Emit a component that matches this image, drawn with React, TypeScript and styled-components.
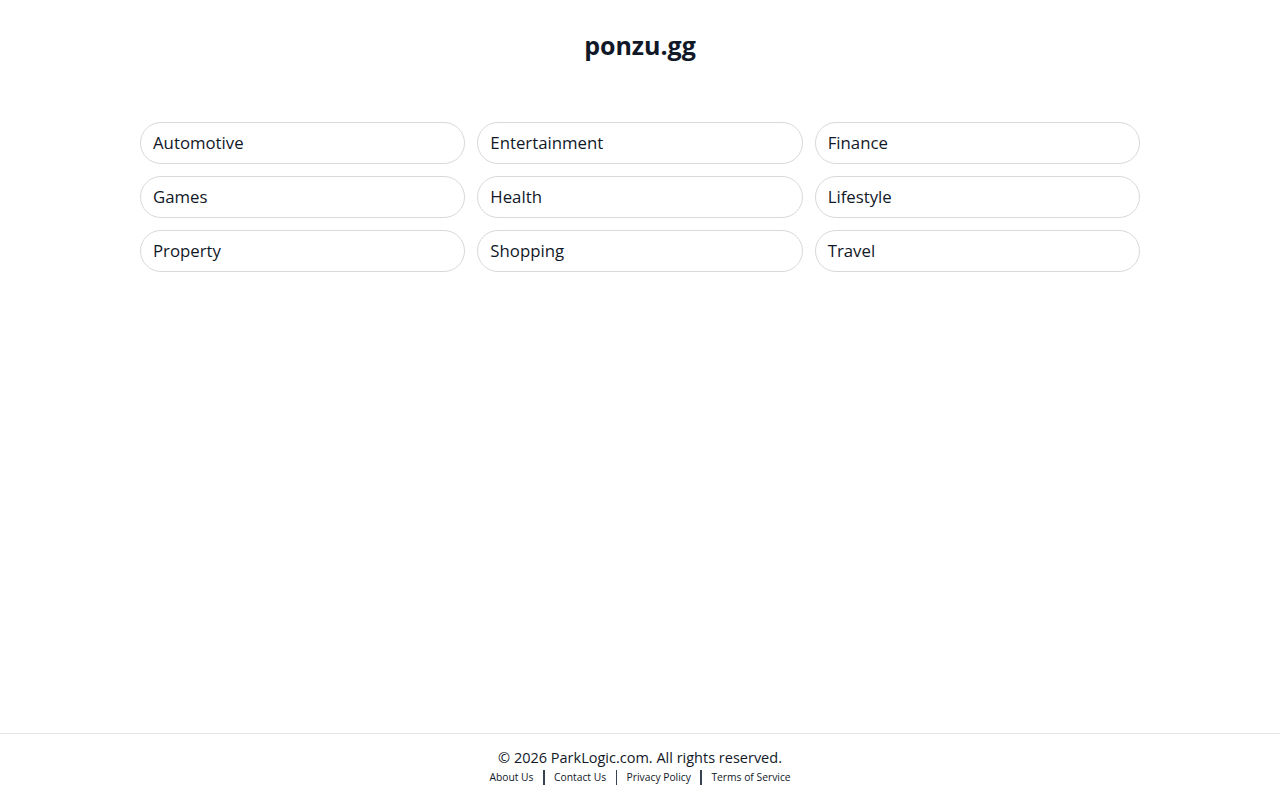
import styled, { createGlobalStyle } from "styled-components";

const GlobalStyle = createGlobalStyle`
  html, body {
    margin: 0;
    padding: 0;
    background: #ffffff;
  }
  body {
    font-family: "Open Sans", "Noto Sans", "Liberation Sans", sans-serif;
    color: #111827;
  }
`;

const Page = styled.div`
  min-height: 100vh;
  display: flex;
  flex-direction: column;
`;

const Main = styled.main`
  flex: 1;
  display: flex;
  flex-direction: column;
  align-items: center;
`;

const Title = styled.h1`
  margin: 29px 0 0;
  font-size: 25px;
  line-height: 33px;
  font-weight: 700;
  color: #111827;
`;

const Grid = styled.div`
  margin-top: 60px;
  width: 1000px;
  display: grid;
  grid-template-columns: repeat(3, 1fr);
  gap: 12px;
`;

const Pill = styled.a`
  display: flex;
  align-items: center;
  height: 42px;
  box-sizing: border-box;
  padding: 0 12px 2px;
  border: 1px solid #d9d9d9;
  border-radius: 21px;
  font-size: 16.8px;
  color: #111827;
  text-decoration: none;
  cursor: pointer;
`;

const Footer = styled.footer`
  border-top: 1px solid #e5e5e5;
  height: 67px;
  display: flex;
  flex-direction: column;
  align-items: center;
  padding-top: 14px;
  box-sizing: border-box;
`;

const Copy = styled.div`
  font-size: 14.5px;
  line-height: 20px;
  color: #111827;
`;

const Links = styled.nav`
  display: flex;
  align-items: center;
  margin-top: 1px;
  font-size: 10.3px;
  line-height: 16px;
`;

const FooterLink = styled.a`
  color: #111827;
  text-decoration: none;
`;

const Sep = styled.span`
  display: inline-block;
  width: 1.5px;
  height: 15px;
  background: #374151;
  margin: 0 9.5px;
`;

const categories = [
  "Automotive",
  "Entertainment",
  "Finance",
  "Games",
  "Health",
  "Lifestyle",
  "Property",
  "Shopping",
  "Travel",
];

const footerLinks = ["About Us", "Contact Us", "Privacy Policy", "Terms of Service"];

export default function App() {
  return (
    <Page>
      <GlobalStyle />
      <Main>
        <Title>ponzu.gg</Title>
        <Grid>
          {categories.map((c) => (
            <Pill key={c}>{c}</Pill>
          ))}
        </Grid>
      </Main>
      <Footer>
        <Copy>© 2026 ParkLogic.com. All rights reserved.</Copy>
        <Links>
          {footerLinks.map((l, i) => (
            <span key={l} style={{ display: "contents" }}>
              {i > 0 && <Sep />}
              <FooterLink>{l}</FooterLink>
            </span>
          ))}
        </Links>
      </Footer>
    </Page>
  );
}
